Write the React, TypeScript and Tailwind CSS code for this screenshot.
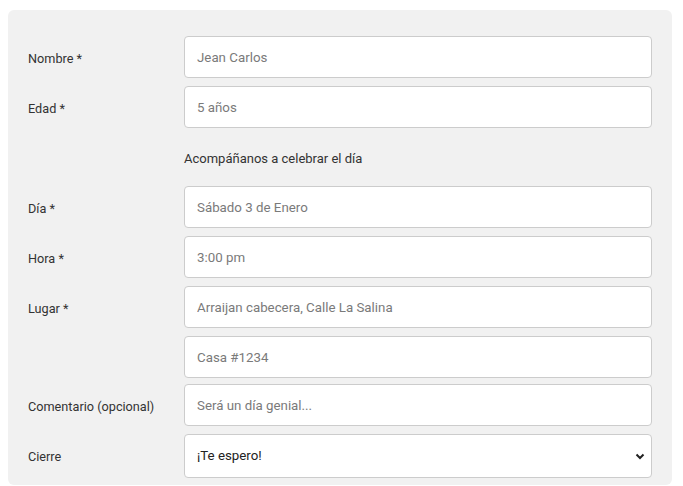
import React from 'react';

const font = { fontFamily: 'Roboto, "Liberation Sans", sans-serif' };

interface RowProps {
  label?: string;
  placeholder: string;
  className?: string;
}

const Row: React.FC<RowProps> = ({ label, placeholder, className = 'mb-2' }) => (
  <div className={`flex items-center ${className}`}>
    <label className="w-[156px] shrink-0 pt-[3px] text-[12.7px] text-[#333]">{label}</label>
    <input
      placeholder={placeholder}
      className="h-[42px] flex-1 rounded-[4px] border border-[#ccc] bg-white px-3 text-[13.3px] text-[#333] outline-none placeholder:text-[#7a7a7a]"
    />
  </div>
);

export default function App() {
  return (
    <div className="h-[486px] bg-white pt-[10px] pl-[8px]" style={font}>
      <div className="w-[664px] h-[475px] rounded-[6px] bg-[#f1f1f1] pl-[20px] pr-[20px] pt-[26px]">
        <Row label="Nombre *" placeholder="Jean Carlos" />
        <Row label="Edad *" placeholder="5 años" className="" />
        <div className="flex h-[58px] items-center pt-[3px] pl-[156px] text-[13px] text-[#333]">
          Acompáñanos a celebrar el día
        </div>
        <Row label="Día *" placeholder="Sábado 3 de Enero" />
        <Row label="Hora *" placeholder="3:00 pm" />
        <Row label="Lugar *" placeholder="Arraijan cabecera, Calle La Salina" />
        <Row placeholder="Casa #1234" className="mb-[6px]" />
        <Row label="Comentario (opcional)" placeholder="Será un día genial..." />
        <div className="flex items-center">
          <label className="w-[156px] shrink-0 pt-[2px] text-[12.7px] text-[#333]">Cierre</label>
          <div className="relative flex-1">
            <select className="h-[44px] w-full appearance-none rounded-[4px] border border-[#ccc] bg-white px-3 text-[13.3px] text-[#222] outline-none">
              <option>¡Te espero!</option>
            </select>
            <svg
              className="pointer-events-none absolute right-[7px] top-1/2 -translate-y-1/2"
              width="10"
              height="8"
              viewBox="0 0 10 8"
            >
              <path d="M1.5 2.5 L5 6 L8.5 2.5" fill="none" stroke="#222" strokeWidth="2" />
            </svg>
          </div>
        </div>
      </div>
    </div>
  );
}
